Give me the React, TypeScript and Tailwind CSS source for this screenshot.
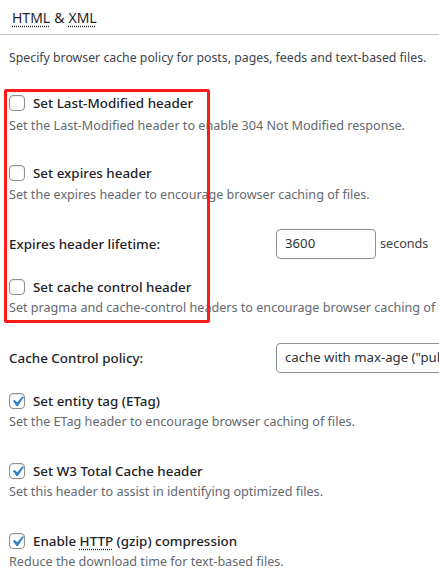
import React from "react";

type Item =
  | { kind: "check"; label: React.ReactNode; desc: string; checked?: boolean; gap: string; descGap: string }
  | { kind: "field"; label: string; gap: string; control: React.ReactNode };

function Box({ checked }: { checked?: boolean }) {
  return (
    <span className="relative block h-4 w-4 shrink-0 rounded-[4px] border border-[#8c8f94] bg-white shadow-[inset_0_1px_2px_rgba(0,0,0,0.1)]">
      {checked && (
        <svg viewBox="0 0 20 20" className="absolute -left-[3px] -top-[3px] h-[21px] w-[21px]" fill="#3582c4">
          <path d="M14.83 4.89l1.34.94-5.81 8.38H9.02L5.78 9.67l1.34-1.25 2.57 2.4z" />
        </svg>
      )}
    </span>
  );
}

const items: Item[] = [
  {
    kind: "check",
    label: "Set Last-Modified header",
    desc: "Set the Last-Modified header to enable 304 Not Modified response.",
    gap: "mt-[25px]",
    descGap: "mt-[3px]",
  },
  {
    kind: "check",
    label: "Set expires header",
    desc: "Set the expires header to encourage browser caching of files.",
    gap: "mt-[27px]",
    descGap: "mt-[2px]",
  },
  {
    kind: "field",
    label: "Expires header lifetime:",
    gap: "mt-[24px]",
    control: (
      <div className="flex shrink-0 items-center">
        <div className="flex h-[30px] w-[100px] items-center rounded-[4px] border border-[#8c8f94] bg-white px-2 text-[13.2px] text-[#2c3338]">
          3600
        </div>
        <span className="ml-1 text-[12.6px] text-[#3c434a]">seconds</span>
      </div>
    ),
  },
  {
    kind: "check",
    label: "Set cache control header",
    desc: "Set pragma and cache-control headers to encourage browser caching of files.",
    gap: "mt-[18px]",
    descGap: "mt-[1px]",
  },
  {
    kind: "field",
    label: "Cache Control policy:",
    gap: "mt-[25px]",
    control: (
      <div className="flex h-[30px] w-[260px] shrink-0 items-center whitespace-nowrap rounded-[4px] border border-[#8c8f94] bg-white px-2 text-[13.2px] text-[#2c3338]">
        cache with max-age ("public, max-age=EXPIRES_SECONDS")
      </div>
    ),
  },
  {
    kind: "check",
    label: "Set entity tag (ETag)",
    desc: "Set the ETag header to encourage browser caching of files.",
    checked: true,
    gap: "mt-[18px]",
    descGap: "mt-[1px]",
  },
  {
    kind: "check",
    label: "Set W3 Total Cache header",
    desc: "Set this header to assist in identifying optimized files.",
    checked: true,
    gap: "mt-[29px]",
    descGap: "mt-[1px]",
  },
  {
    kind: "check",
    label: (
      <>
        Enable <span className="underline decoration-dotted underline-offset-[3px]">HTTP</span> (gzip) compression
      </>
    ),
    desc: "Reduce the download time for text-based files.",
    checked: true,
    gap: "mt-[29px]",
    descGap: "mt-[1px]",
  },
];

export default function App() {
  return (
    <div className="relative h-[579px] w-[439px] overflow-hidden bg-white font-['Noto_Sans',sans-serif]">
      {/* tab heading */}
      <div className="flex h-[35px] items-center border-b border-[#c3c4c7] pl-3 text-[14px] text-[#1d2327]">
        <span className="underline decoration-dotted underline-offset-[3px]">HTML</span>
        <span className="mx-1">&amp;</span>
        <span className="underline decoration-dotted underline-offset-[3px]">XML</span>
      </div>

      <div className="pl-[9px]">
        <p className="mt-[13px] h-5 whitespace-nowrap text-[12.3px] leading-5 text-[#3c434a]">
          Specify browser cache policy for posts, pages, feeds and text-based files.
        </p>

        {items.map((it, i) =>
          it.kind === "check" ? (
            <div key={i} className={it.gap}>
              <label className="flex h-5 items-center gap-2 whitespace-nowrap text-[13.4px] font-medium leading-5 text-[#1d2327]">
                <Box checked={it.checked} />
                <span>{it.label}</span>
              </label>
              <p className={`${it.descGap} h-5 whitespace-nowrap text-[12.6px] leading-5 text-[#646970]`}>{it.desc}</p>
            </div>
          ) : (
            <div key={i} className={`${it.gap} flex h-[30px] items-center whitespace-nowrap`}>
              <span className="w-[267px] shrink-0 text-[13.4px] font-medium text-[#1d2327]">{it.label}</span>
              {it.control}
            </div>
          )
        )}
      </div>

      {/* annotation frame */}
      <div className="pointer-events-none absolute left-[4px] top-[89px] h-[234px] w-[206px] rounded-[2px] border-[3px] border-[#ff1a1a]" />
    </div>
  );
}
